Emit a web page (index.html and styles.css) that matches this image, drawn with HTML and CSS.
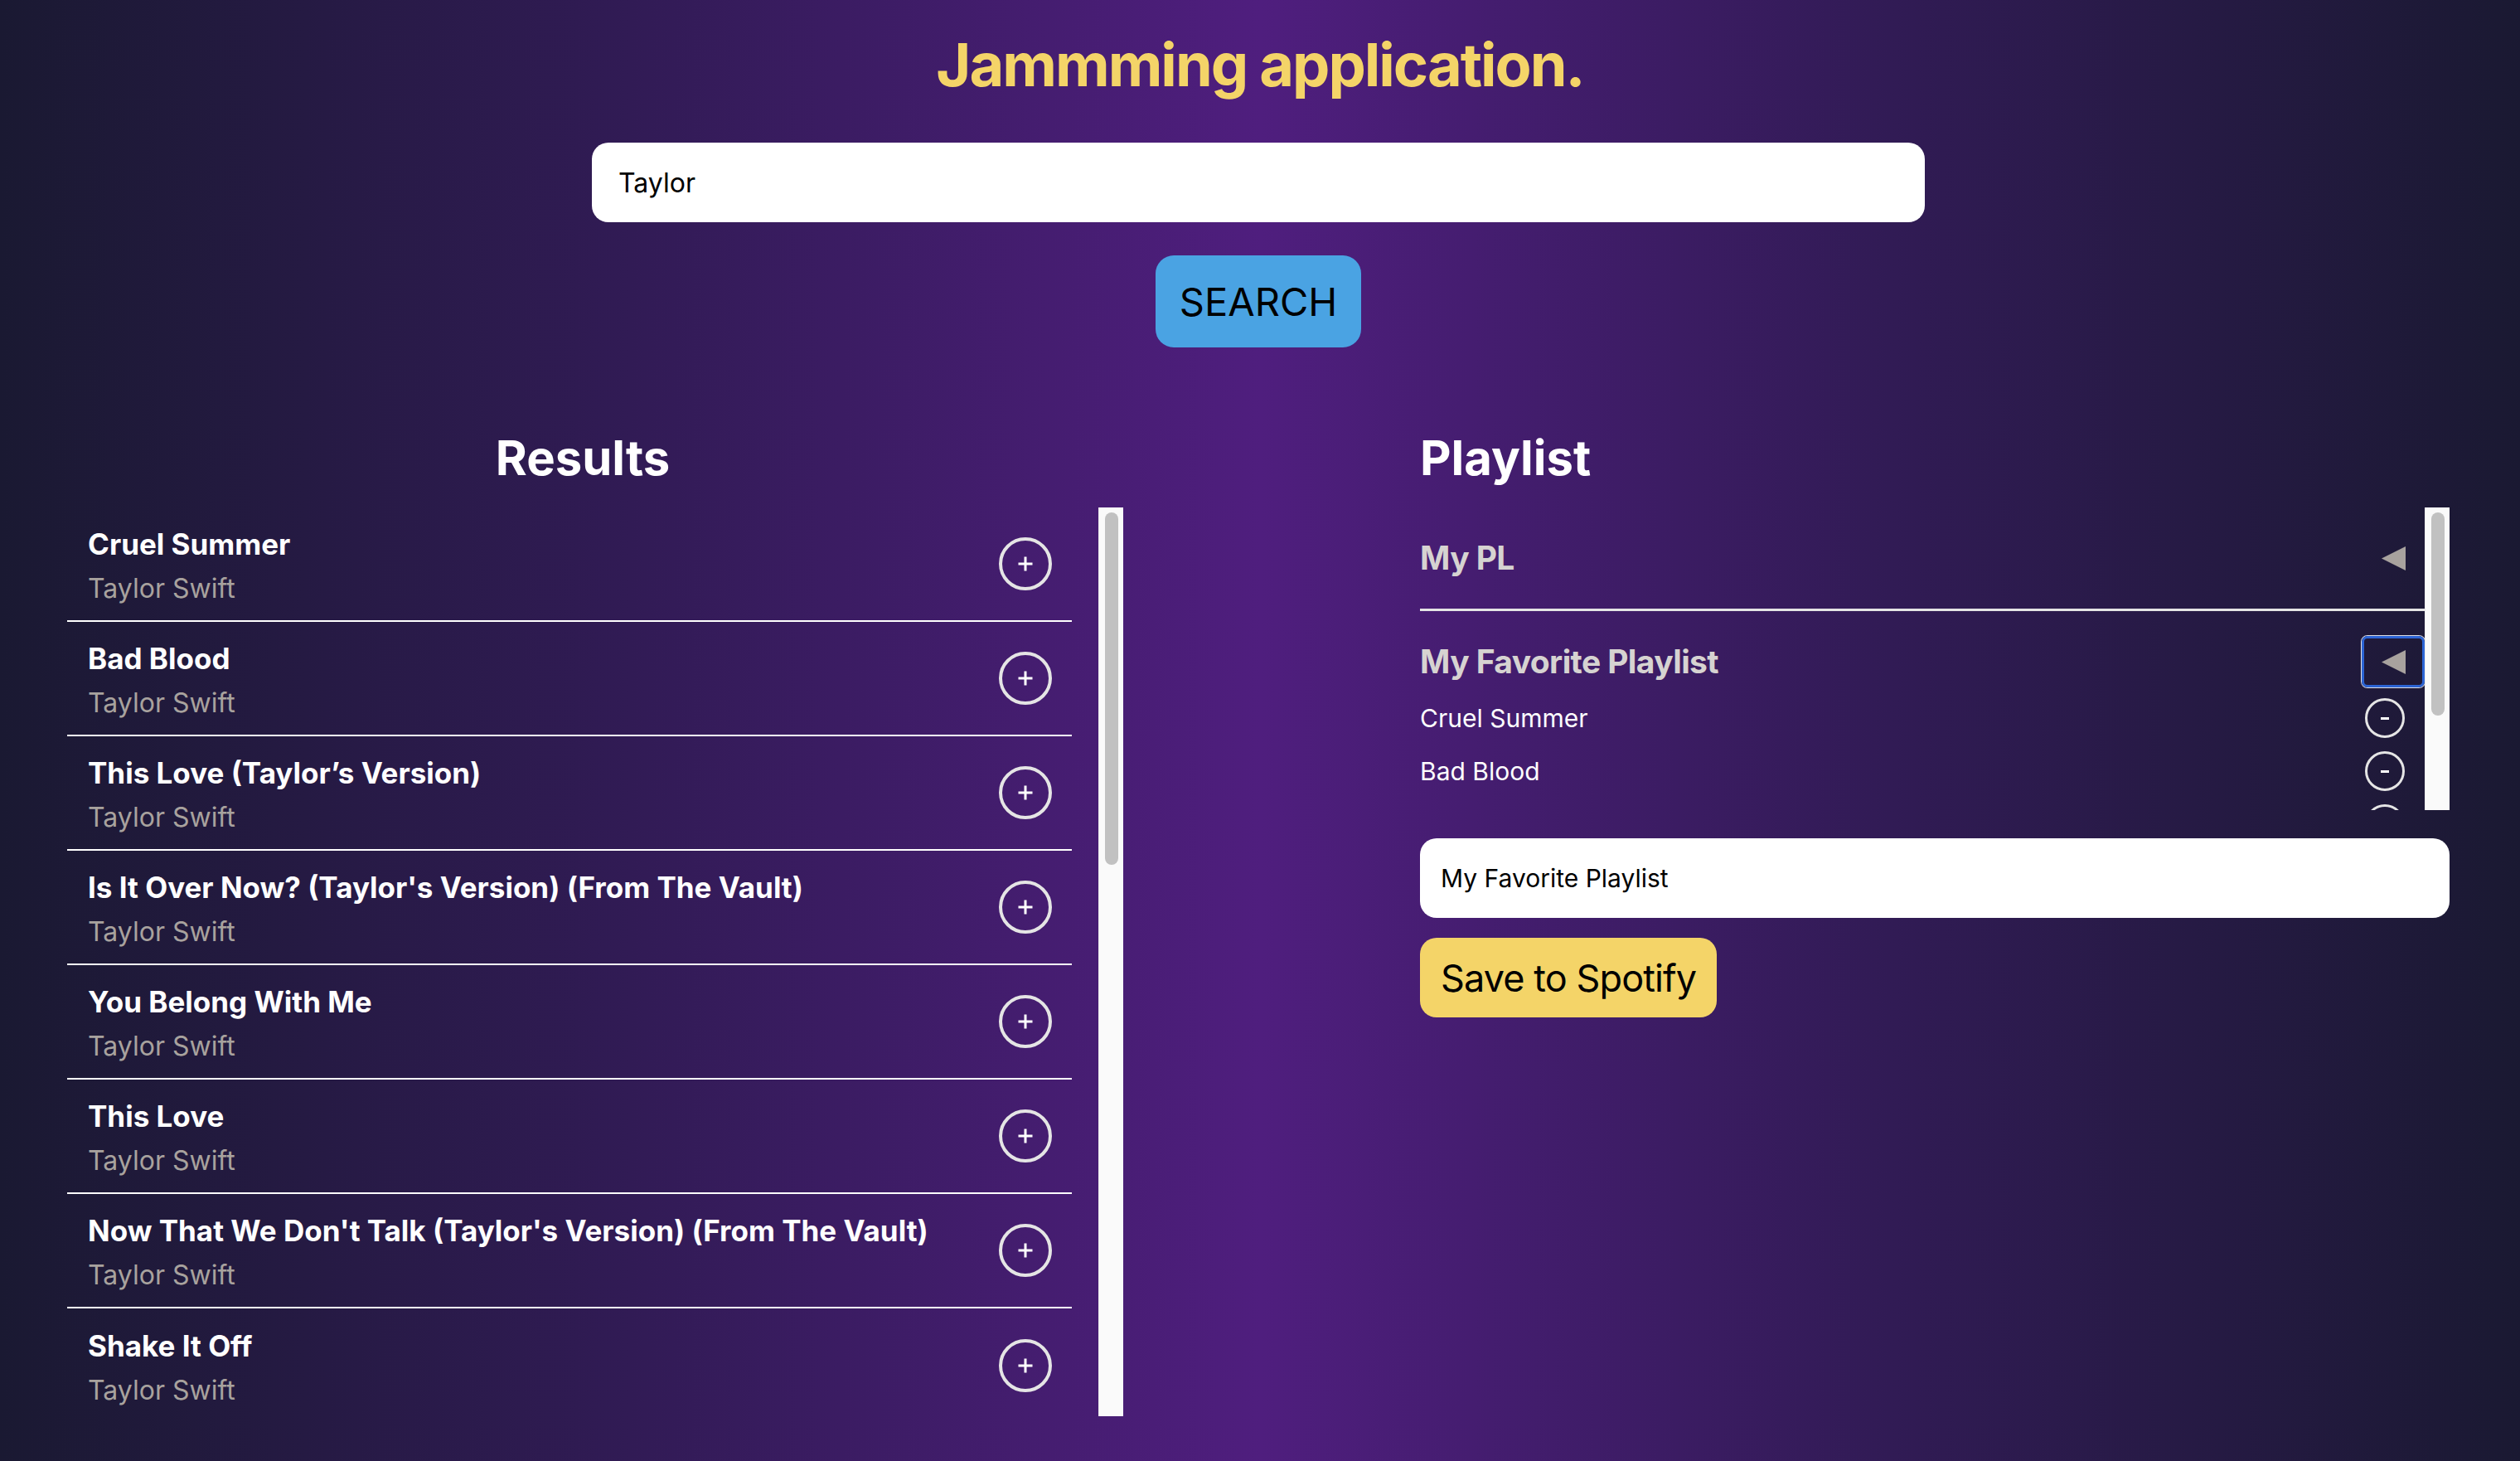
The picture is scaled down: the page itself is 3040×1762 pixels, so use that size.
FILE: index.html
```html
<!DOCTYPE html>
<html lang="en">
<head>
<meta charset="utf-8">
<title>Jammming</title>
<link rel="stylesheet" href="styles.css">
</head>
<body>
<div class="app">
  <h1 class="app-title">Jammming application.</h1>

  <div class="search-bar">
    <input class="search-input" type="text" value="Taylor">
    <button class="search-button">SEARCH</button>
  </div>

  <div class="columns">
    <section class="results">
      <h2 class="section-title results-title">Results</h2>
      <div class="scroll-area results-area">
        <ul class="results-list">
          <li class="track"><div class="track-info"><h3 class="track-name">Cruel Summer</h3><p class="track-artist">Taylor Swift</p></div><button class="add-btn" aria-label="Add"><svg viewBox="0 0 18 18" width="18" height="18"><path d="M9 0.5V17.5M0.5 9H17.5" stroke="#fff" stroke-width="3"/></svg></button></li>
          <li class="track"><div class="track-info"><h3 class="track-name">Bad Blood</h3><p class="track-artist">Taylor Swift</p></div><button class="add-btn" aria-label="Add"><svg viewBox="0 0 18 18" width="18" height="18"><path d="M9 0.5V17.5M0.5 9H17.5" stroke="#fff" stroke-width="3"/></svg></button></li>
          <li class="track"><div class="track-info"><h3 class="track-name">This Love (Taylor’s Version)</h3><p class="track-artist">Taylor Swift</p></div><button class="add-btn" aria-label="Add"><svg viewBox="0 0 18 18" width="18" height="18"><path d="M9 0.5V17.5M0.5 9H17.5" stroke="#fff" stroke-width="3"/></svg></button></li>
          <li class="track"><div class="track-info"><h3 class="track-name">Is It Over Now? (Taylor's Version) (From The Vault)</h3><p class="track-artist">Taylor Swift</p></div><button class="add-btn" aria-label="Add"><svg viewBox="0 0 18 18" width="18" height="18"><path d="M9 0.5V17.5M0.5 9H17.5" stroke="#fff" stroke-width="3"/></svg></button></li>
          <li class="track"><div class="track-info"><h3 class="track-name">You Belong With Me</h3><p class="track-artist">Taylor Swift</p></div><button class="add-btn" aria-label="Add"><svg viewBox="0 0 18 18" width="18" height="18"><path d="M9 0.5V17.5M0.5 9H17.5" stroke="#fff" stroke-width="3"/></svg></button></li>
          <li class="track"><div class="track-info"><h3 class="track-name">This Love</h3><p class="track-artist">Taylor Swift</p></div><button class="add-btn" aria-label="Add"><svg viewBox="0 0 18 18" width="18" height="18"><path d="M9 0.5V17.5M0.5 9H17.5" stroke="#fff" stroke-width="3"/></svg></button></li>
          <li class="track"><div class="track-info"><h3 class="track-name">Now That We Don't Talk (Taylor's Version) (From The Vault)</h3><p class="track-artist">Taylor Swift</p></div><button class="add-btn" aria-label="Add"><svg viewBox="0 0 18 18" width="18" height="18"><path d="M9 0.5V17.5M0.5 9H17.5" stroke="#fff" stroke-width="3"/></svg></button></li>
          <li class="track"><div class="track-info"><h3 class="track-name">Shake It Off</h3><p class="track-artist">Taylor Swift</p></div><button class="add-btn" aria-label="Add"><svg viewBox="0 0 18 18" width="18" height="18"><path d="M9 0.5V17.5M0.5 9H17.5" stroke="#fff" stroke-width="3"/></svg></button></li>
        </ul>
        <div class="scrollbar"><div class="scrollbar-thumb results-thumb"></div></div>
      </div>
    </section>

    <section class="playlist">
      <h2 class="section-title playlist-title">Playlist</h2>
      <div class="scroll-area playlist-area">
        <div class="playlist-box">
          <div class="pl-item pl-collapsed">
            <div class="pl-header">
              <h3 class="pl-name">My PL</h3>
              <button class="pl-toggle" aria-label="Expand"><svg viewBox="0 0 29 29" width="29" height="29"><polygon points="0,14.5 29,0 29,29" fill="#a8a29e"/></svg></button>
            </div>
          </div>
          <div class="pl-item">
            <div class="pl-header">
              <h3 class="pl-name">My Favorite Playlist</h3>
              <button class="pl-toggle pl-toggle-focused" aria-label="Collapse"><svg viewBox="0 0 29 29" width="29" height="29"><polygon points="0,14.5 29,0 29,29" fill="#a8a29e"/></svg></button>
            </div>
            <ul class="pl-tracks">
              <li class="pl-track"><span class="pl-track-name">Cruel Summer</span><button class="remove-btn" aria-label="Remove"><svg viewBox="0 0 10 3" width="10" height="3"><rect width="10" height="3" fill="#fff"/></svg></button></li>
              <li class="pl-track"><span class="pl-track-name">Bad Blood</span><button class="remove-btn" aria-label="Remove"><svg viewBox="0 0 10 3" width="10" height="3"><rect width="10" height="3" fill="#fff"/></svg></button></li>
              <li class="pl-track pl-track-clipped"><button class="remove-btn" aria-label="Remove"><svg viewBox="0 0 10 3" width="10" height="3"><rect width="10" height="3" fill="#fff"/></svg></button></li>
            </ul>
          </div>
        </div>
        <div class="scrollbar"><div class="scrollbar-thumb playlist-thumb"></div></div>
      </div>
      <input class="pl-name-input" type="text" value="My Favorite Playlist">
      <button class="save-button">Save to Spotify</button>
    </section>
  </div>
</div>
</body>
</html>
```

FILE: styles.css
```css
* {
  box-sizing: border-box;
}

html, body {
  margin: 0;
  padding: 0;
}

body {
  min-height: 100vh;
  font-family: Inter, "Noto Sans", "Liberation Sans", sans-serif;
  background: linear-gradient(90deg, #1a1932 0%, #311b55 25%, #4f1e7e 50%, #311b55 75%, #1a1932 100%);
  color: #fff;
}

.app {
  display: flex;
  flex-direction: column;
  align-items: center;
  padding-top: 34px;
}

.app-title {
  margin: 0;
  font-size: 72px;
  font-weight: 700;
  line-height: 87px;
  color: #f4d468;
  letter-spacing: -2px;
}

.search-bar {
  display: flex;
  flex-direction: column;
  align-items: center;
  margin-top: 51px;
  padding-right: 4px;
  gap: 40px;
}

.search-input {
  width: 1608px;
  height: 96px;
  border: none;
  border-radius: 20px;
  background: #fff;
  padding: 0 32px;
  font-family: Inter, "Noto Sans", sans-serif;
  font-size: 32px;
  color: #000;
  outline: none;
}

.search-button {
  width: 248px;
  height: 111px;
  border: none;
  border-radius: 22px;
  background: #4aa3e3;
  color: #000;
  font-family: Inter, "Noto Sans", sans-serif;
  font-size: 47px;
  font-weight: 400;
  padding: 0;
}

.columns {
  align-self: stretch;
  display: grid;
  grid-template-columns: 1274px 1242px;
  column-gap: 358px;
  padding-left: 81px;
  margin-top: 98px;
}

.section-title {
  margin: 0 0 25px;
  font-size: 58px;
  font-weight: 700;
  line-height: 70px;
  color: #fff;
}

.results-title {
  text-align: center;
  padding-right: 30px;
}

.scroll-area {
  display: flex;
}

.results-area {
  height: 1096px;
}

.playlist-area {
  height: 365px;
}

.scrollbar {
  flex: none;
  width: 30px;
  background: #fafafa;
  box-shadow: inset 1px 0 0 #ebebeb;
  padding: 6px 6px 0 8px;
}

.scrollbar-thumb {
  width: 16px;
  border-radius: 8px;
  background: #c1c1c1;
}

.results-thumb {
  height: 425px;
}

.playlist-thumb {
  height: 245px;
}

.results-list {
  flex: 1;
  list-style: none;
  margin: 0;
  padding: 0 32px 0 0;
  overflow: hidden;
}

.track {
  display: flex;
  align-items: center;
  justify-content: space-between;
  height: 138px;
  padding: 0 24px 0 25px;
  border-bottom: 2px solid #fff;
}

.track:last-child {
  border-bottom: none;
}

.track-info {
  display: flex;
  flex-direction: column;
  gap: 14px;
  padding-top: 3px;
}

.track-name {
  margin: 0;
  font-size: 35px;
  font-weight: 700;
  line-height: 42px;
  color: #fff;
}

.track-artist {
  margin: 0;
  font-size: 32px;
  line-height: 38px;
  color: #a8a29e;
}

.add-btn {
  flex: none;
  width: 64px;
  height: 64px;
  border-radius: 50%;
  border: 4px solid #e5e5e5;
  background: transparent;
  padding: 0;
  display: flex;
  align-items: center;
  justify-content: center;
}

.playlist-box {
  flex: 1;
  overflow: hidden;
}

.pl-item {
  padding-top: 30px;
}

.pl-collapsed {
  padding-bottom: 30px;
  border-bottom: 3px solid #e5e5e5;
}

.pl-header {
  display: flex;
  align-items: center;
  justify-content: space-between;
  height: 62px;
}

.pl-name {
  margin: 0;
  font-size: 39px;
  font-weight: 700;
  line-height: 48px;
  letter-spacing: -0.6px;
  color: #d6d3d1;
}

.pl-toggle {
  width: 76px;
  height: 62px;
  border: 3px solid transparent;
  border-radius: 7px;
  background: transparent;
  padding: 0;
  display: flex;
  align-items: center;
  justify-content: center;
}

.pl-toggle-focused {
  border-color: #2c64d4;
  box-shadow: 0 0 0 1px rgba(255, 255, 255, 0.85);
}

.pl-tracks {
  list-style: none;
  margin: 5px 0 0;
  padding: 0;
}

.pl-track {
  display: flex;
  align-items: center;
  justify-content: space-between;
  height: 64px;
  padding-right: 24px;
}

.pl-track-clipped {
  justify-content: flex-end;
}

.pl-track-name {
  font-size: 30px;
  line-height: 36px;
  color: #fff;
}

.remove-btn {
  flex: none;
  width: 48px;
  height: 48px;
  border-radius: 50%;
  border: 3px solid #e5e5e5;
  background: transparent;
  padding: 0;
  display: flex;
  align-items: center;
  justify-content: center;
}

.pl-name-input {
  display: block;
  width: 1242px;
  height: 96px;
  margin-top: 34px;
  border: none;
  border-radius: 20px;
  background: #fff;
  padding: 0 25px;
  font-family: Inter, "Noto Sans", sans-serif;
  font-size: 30px;
  color: #000;
  outline: none;
}

.save-button {
  display: block;
  margin-top: 24px;
  height: 96px;
  padding: 0 25px;
  border: none;
  border-radius: 20px;
  background: #f4d468;
  color: #000;
  font-family: Inter, "Noto Sans", sans-serif;
  font-size: 45px;
  font-weight: 400;
  letter-spacing: -0.9px;
}
```
